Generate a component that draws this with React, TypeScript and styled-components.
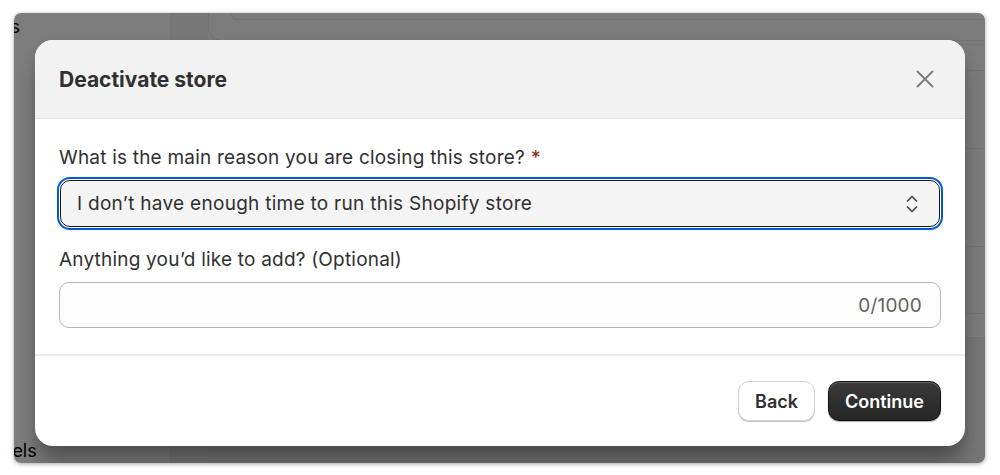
import React from 'react';
import styled, { createGlobalStyle } from 'styled-components';

const GlobalStyle = createGlobalStyle`
    html, body {
        margin: 0;
        padding: 0;
        background: #ffffff;
    }
    body {
        font-family: Inter, "Noto Sans", sans-serif;
        -webkit-font-smoothing: antialiased;
    }
`;

const Screen = styled.div`
    width: 1000px;
    height: 475px;
    padding: 13px 15px 12px 14px;
    box-sizing: border-box;
    display: flex;
`;

const Window = styled.div`
    position: relative;
    flex: 1;
    border-radius: 7px;
    overflow: hidden;
    box-shadow: 0 1px 4px rgba(0, 0, 0, 0.35);
    background: #f6f6f6;
    display: flex;
`;

// page under the overlay
const Sidebar = styled.div`
    width: 156px;
    background: #fbfbfb;
    display: flex;
    flex-direction: column;
    justify-content: space-between;
    padding: 2px 0 0;
    font-size: 18px;
    color: #000;
`;

const SideItem = styled.div<{ $shift: number }>`
    margin-left: ${p => p.$shift}px;
    white-space: nowrap;
    line-height: 24px;
`;

const Gutter = styled.div`
    width: 37px;
    background: #efefef;
    border-left: 1px solid #e6e6e6;
`;

const Main = styled.div`
    flex: 1;
    display: flex;
    flex-direction: column;
    background: #f9f9f9;
`;

const TopCard = styled.div`
    height: 27px;
    border: 1px solid #e2e2e2;
    border-top: none;
    border-radius: 0 0 14px 14px;
    padding: 0 0 0 22px;
    display: flex;
    flex-direction: column;
    margin-right: -20px;
`;

const InnerCard = styled.div`
    height: 6px;
    border: 1px solid #e2e2e2;
    border-top: none;
    border-radius: 0 0 12px 12px;
    margin-right: -20px;
`;

const Row = styled.div<{ $h: number }>`
    height: ${p => p.$h}px;
    border-bottom: 1px solid #e4e4e4;
`;

const Footer = styled.div`
    flex: 1;
    background: #ececec;
`;

const Overlay = styled.div`
    position: absolute;
    inset: 0;
    background: rgba(0, 0, 0, 0.5);
    padding: 27px 20px 17px 21px;
    display: flex;
`;

const Modal = styled.div`
    flex: 1;
    background: #ffffff;
    border-radius: 18px;
    overflow: hidden;
    display: flex;
    flex-direction: column;
    box-shadow: 0 22px 22px -4px rgba(0, 0, 0, 0.3), 0 4px 12px rgba(0, 0, 0, 0.12);
`;

const Header = styled.div`
    height: 78px;
    background: #f2f2f2;
    border-bottom: 1px solid #e3e3e3;
    display: flex;
    align-items: center;
    justify-content: space-between;
    padding: 0 30px 0 24px;
`;

const Title = styled.h2`
    margin: 0;
    font-size: 21px;
    font-weight: 650;
    color: #303030;
`;

const CloseButton = styled.button`
    border: none;
    background: none;
    padding: 0;
    display: flex;
    color: #7a7a7a;
    cursor: pointer;
`;

const Body = styled.div`
    padding: 27px 24px 26px;
    display: flex;
    flex-direction: column;
    border-bottom: 2px solid #ebebeb;
`;

const Label = styled.label<{ $gap?: number }>`
    font-size: 19px;
    letter-spacing: 0.2px;
    line-height: 24px;
    color: #303030;
    margin-top: ${p => p.$gap ?? 0}px;
    margin-bottom: 10px;
    span {
        color: #8e1f0b;
        margin-left: 6px;
    }
`;

const Select = styled.div`
    height: 47px;
    margin: 0 1px;
    box-sizing: border-box;
    border: 1.5px solid #1a1a1a;
    border-radius: 10px;
    background: #f4f4f4;
    outline: 2.5px solid #005bd3;
    outline-offset: 1px;
    display: flex;
    align-items: center;
    justify-content: space-between;
    padding: 0 20px 0 16px;
    font-size: 19px;
    letter-spacing: 0.28px;
    color: #303030;
`;

const TextField = styled.div`
    height: 46px;
    box-sizing: border-box;
    border: 1px solid #b5b5b5;
    border-radius: 10px;
    background: #fdfdfd;
    display: flex;
    align-items: center;
    justify-content: flex-end;
    padding: 0 18px;
    font-size: 19px;
    letter-spacing: 0.2px;
    color: #616161;
`;

const Actions = styled.div`
    flex: 1;
    display: flex;
    justify-content: flex-end;
    align-items: center;
    gap: 13px;
    padding: 0 24px 0 0;
`;

const Button = styled.button<{ $primary?: boolean }>`
    height: 40px;
    padding: 0 16px;
    border-radius: 11px;
    font-family: Inter, "Noto Sans", sans-serif;
    font-size: 18px;
    font-weight: 600;
    cursor: pointer;
    color: ${p => (p.$primary ? '#ffffff' : '#303030')};
    background: ${p => (p.$primary ? 'linear-gradient(#3a3a3a, #262626)' : '#ffffff')};
    border: 1px solid ${p => (p.$primary ? '#111111' : '#d4d4d4')};
    box-shadow: ${p =>
        p.$primary
            ? 'inset 0 1px 0 rgba(255,255,255,0.2), 0 1px 1px rgba(0,0,0,0.3)'
            : '0 1px 0 #c8c8c8'};
`;

const App: React.FC = () => {
    return (
        <>
            <GlobalStyle />
            <Screen>
                <Window>
                    <Sidebar>
                        <SideItem $shift={-38}>Apps</SideItem>
                        <SideItem $shift={-105}>Sales channels</SideItem>
                    </Sidebar>
                    <Gutter />
                    <Main>
                        <TopCard>
                            <InnerCard />
                        </TopCard>
                        <Row $h={3} />
                        <Row $h={25} />
                        <Row $h={77} />
                        <Row $h={97} />
                        <Row $h={66} />
                        <Row $h={23} />
                        <Footer />
                    </Main>
                    <Overlay>
                        <Modal>
                            <Header>
                                <Title>Deactivate store</Title>
                                <CloseButton aria-label="Close">
                                    <svg width="20" height="20" viewBox="0 0 20 20" fill="none">
                                        <path d="M2.5 2.5l15 15M17.5 2.5l-15 15" stroke="currentColor" strokeWidth="1.8" strokeLinecap="round" />
                                    </svg>
                                </CloseButton>
                            </Header>
                            <Body>
                                <Label>
                                    What is the main reason you are closing this store?<span>*</span>
                                </Label>
                                <Select>
                                    I don’t have enough time to run this Shopify store
                                    <svg width="14" height="20" viewBox="0 0 14 20" fill="none">
                                        <path d="M2.5 7l4.5-4.5L11.5 7M2.5 13l4.5 4.5 4.5-4.5" stroke="#4a4a4a" strokeWidth="1.7" strokeLinecap="round" strokeLinejoin="round" />
                                    </svg>
                                </Select>
                                <Label $gap={21}>Anything you’d like to add? (Optional)</Label>
                                <TextField>0/1000</TextField>
                            </Body>
                            <Actions>
                                <Button>Back</Button>
                                <Button $primary>Continue</Button>
                            </Actions>
                        </Modal>
                    </Overlay>
                </Window>
            </Screen>
        </>
    );
};

export default App;
